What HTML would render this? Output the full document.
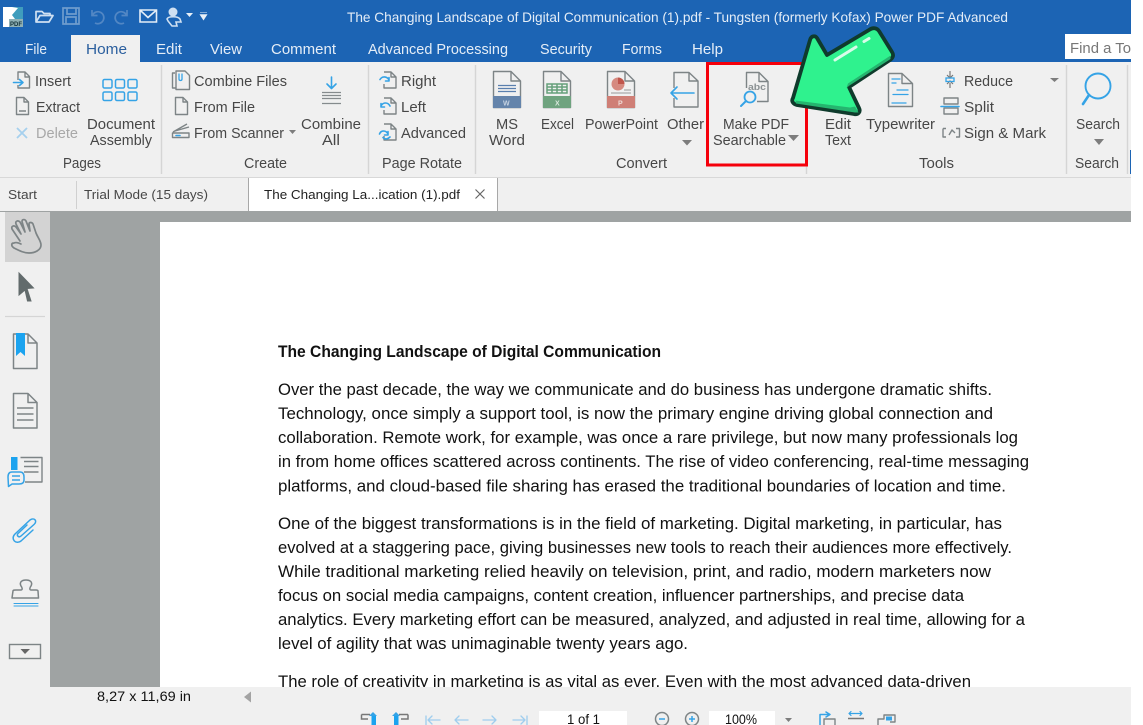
<!DOCTYPE html>
<html><head><meta charset="utf-8"><title>Power PDF</title>
<style>
html,body{margin:0;padding:0;background:#fff;width:1143px;height:725px;overflow:hidden}
svg{display:block}
text{font-family:"Liberation Sans",sans-serif;white-space:pre}
.w{fill:#e4edf7;font-size:14px}
.t{fill:#e4edf7;font-size:14.5px}
.r{fill:#474747;font-size:14.5px}
.s{fill:#474747;font-size:13px}
.d{fill:#111;font-size:16.2px}
.g{fill:none;stroke:#7d8486;stroke-width:1.4;stroke-linejoin:round}
.b{fill:none;stroke:#35a3e6;stroke-width:1.6;stroke-linecap:round;stroke-linejoin:round}
.l{stroke:#d5d5d5;stroke-width:1.4}
</style></head><body>
<svg width="1143" height="725" viewBox="0 0 1143 725" xmlns="http://www.w3.org/2000/svg">
<rect width="1143" height="725" fill="#fff"/>
<!-- title + tabs -->
<rect width="1131" height="62" fill="#1c64b4"/>
<rect x="71" y="35" width="69" height="27" fill="#f0f0f0"/>
<rect x="0" y="62" width="1131" height="116" fill="#f0f0f0"/>
<rect x="0" y="177" width="1131" height="1.4" fill="#d8d8d8"/>
<rect x="0" y="178" width="1131" height="33" fill="#f0f0f0"/>
<rect x="249" y="178" width="248" height="33" fill="#fff"/>
<path d="M248.500 178V211M497.500 178V211" stroke="#a8a8a8"/>
<path d="M76.500 181V209" stroke="#d0d0d0"/>
<!-- logo -->
<rect x="3" y="7" width="20" height="20" fill="#fff"/>
<path d="M12 7H23V19H15L12 15 18 8Z" fill="#3f9dbd"/>
<path d="M3 19L9 14V19H9V27H3Z" fill="#fff"/>
<rect x="9" y="19" width="14" height="8" fill="#8fb0b5"/>
<text x="10" y="26" style="font-size:6px;font-weight:bold;fill:#14323a" textLength="12" lengthAdjust="spacingAndGlyphs">PDF</text>
<!-- quick access -->
<path d="M36 22V11.500H42L44 13.500H50V16M36 22H49L53 15.500H40L36 22Z" fill="none" stroke="#cfe0f2" stroke-width="1.7" stroke-linejoin="round"/>
<g fill="none" stroke="#6f9ccd" stroke-width="1.7"><path d="M63 8H79V24H63ZM67 8V14H76V8M66 24V17H76V24"/>
<path d="M92 10V15.500H97.500M92.500 15A6 6 0 1 1 95 23" stroke="#5287c4"/><path d="M127 10V15.500H121.500M126.500 15A6 6 0 1 0 124 23" stroke="#5287c4"/></g>
<path d="M140 10H156.500V22H140ZM140.500 10.500L148 17.500L156 10.500" fill="none" stroke="#e4edf7" stroke-width="1.6"/>
<circle cx="173" cy="12" r="4.500" fill="#cfe0f2"/><path d="M167 19C168 16 178 16 180 19L181 22H176L177 26H172L168 21Z" fill="none" stroke="#cfe0f2" stroke-width="1.6"/>
<path d="M186 13H193L189.500 17Z" fill="#e8f0f8"/><path d="M200 12.500H207M200 14.500H207L203.500 20Z" fill="#e8f0f8" stroke="#e8f0f8" stroke-width=".6"/>
<text x="347" y="22" class="w" textLength="661" lengthAdjust="spacingAndGlyphs">The Changing Landscape of Digital Communication (1).pdf - Tungsten (formerly Kofax) Power PDF Advanced</text>
<text x="25" y="54" class="t" textLength="22" lengthAdjust="spacingAndGlyphs">File</text>
<text x="86" y="54" textLength="41" lengthAdjust="spacingAndGlyphs" style="font-size:14.500px;fill:#2b5f9e">Home</text>
<text x="156" y="54" class="t" textLength="26" lengthAdjust="spacingAndGlyphs">Edit</text>
<text x="210" y="54" class="t" textLength="32" lengthAdjust="spacingAndGlyphs">View</text>
<text x="271" y="54" class="t" textLength="65" lengthAdjust="spacingAndGlyphs">Comment</text>
<text x="368" y="54" class="t" textLength="140" lengthAdjust="spacingAndGlyphs">Advanced Processing</text>
<text x="540" y="54" class="t" textLength="52" lengthAdjust="spacingAndGlyphs">Security</text>
<text x="622" y="54" class="t" textLength="40" lengthAdjust="spacingAndGlyphs">Forms</text>
<text x="692" y="54" class="t" textLength="31" lengthAdjust="spacingAndGlyphs">Help</text>
<rect x="1065" y="34" width="66" height="25" fill="#fff"/>
<text x="1070" y="53" textLength="61" lengthAdjust="spacingAndGlyphs" style="font-size:14.500px;fill:#777">Find a To</text>
<!-- ribbon separators -->
<path d="M161.500 65V174M368.500 65V174M475.500 65V174M806.500 65V174M1066.500 65V174M1127.500 65V174" class="l"/>
<rect x="1130" y="150" width="1" height="24" fill="#1c64b4"/>
<!-- ribbon text -->
<text x="35" y="86" class="r" textLength="36" lengthAdjust="spacingAndGlyphs">Insert</text>
<text x="36" y="112" class="r" textLength="44" lengthAdjust="spacingAndGlyphs">Extract</text>
<text x="36" y="138" class="r" textLength="42" lengthAdjust="spacingAndGlyphs" style="fill:#a8a8a8">Delete</text>
<text x="87" y="129" class="r" textLength="68" lengthAdjust="spacingAndGlyphs">Document</text>
<text x="90" y="145" class="r" textLength="62" lengthAdjust="spacingAndGlyphs">Assembly</text>
<text x="63" y="168" class="r" textLength="38" lengthAdjust="spacingAndGlyphs">Pages</text>
<text x="194" y="86" class="r" textLength="93" lengthAdjust="spacingAndGlyphs">Combine Files</text>
<text x="194" y="112" class="r" textLength="61" lengthAdjust="spacingAndGlyphs">From File</text>
<text x="194" y="138" class="r" textLength="90" lengthAdjust="spacingAndGlyphs">From Scanner</text>
<text x="301" y="129" class="r" textLength="60" lengthAdjust="spacingAndGlyphs">Combine</text>
<text x="322" y="145" class="r" textLength="18" lengthAdjust="spacingAndGlyphs">All</text>
<text x="244" y="168" class="r" textLength="43" lengthAdjust="spacingAndGlyphs">Create</text>
<text x="401" y="86" class="r" textLength="35" lengthAdjust="spacingAndGlyphs">Right</text>
<text x="401" y="112" class="r" textLength="25" lengthAdjust="spacingAndGlyphs">Left</text>
<text x="401" y="138" class="r" textLength="65" lengthAdjust="spacingAndGlyphs">Advanced</text>
<text x="382" y="168" class="r" textLength="80" lengthAdjust="spacingAndGlyphs">Page Rotate</text>
<text x="496" y="129" class="r" textLength="22" lengthAdjust="spacingAndGlyphs">MS</text>
<text x="489" y="145" class="r" textLength="36" lengthAdjust="spacingAndGlyphs">Word</text>
<text x="541" y="129" class="r" textLength="33" lengthAdjust="spacingAndGlyphs">Excel</text>
<text x="585" y="129" class="r" textLength="73" lengthAdjust="spacingAndGlyphs">PowerPoint</text>
<text x="667" y="129" class="r" textLength="37" lengthAdjust="spacingAndGlyphs">Other</text>
<text x="616" y="168" class="r" textLength="51" lengthAdjust="spacingAndGlyphs">Convert</text>
<text x="723" y="129" class="r" textLength="66" lengthAdjust="spacingAndGlyphs">Make PDF</text>
<text x="713" y="145" class="r" textLength="73" lengthAdjust="spacingAndGlyphs">Searchable</text>
<text x="825" y="129" class="r" textLength="26" lengthAdjust="spacingAndGlyphs">Edit</text>
<text x="825" y="145" class="r" textLength="26" lengthAdjust="spacingAndGlyphs">Text</text>
<text x="866" y="129" class="r" textLength="69" lengthAdjust="spacingAndGlyphs">Typewriter</text>
<text x="964" y="86" class="r" textLength="49" lengthAdjust="spacingAndGlyphs">Reduce</text>
<text x="964" y="112" class="r" textLength="30" lengthAdjust="spacingAndGlyphs">Split</text>
<text x="964" y="138" class="r" textLength="82" lengthAdjust="spacingAndGlyphs">Sign &amp; Mark</text>
<text x="919" y="168" class="r" textLength="35" lengthAdjust="spacingAndGlyphs">Tools</text>
<text x="1076" y="129" class="r" textLength="44" lengthAdjust="spacingAndGlyphs">Search</text>
<text x="1075" y="168" class="r" textLength="44" lengthAdjust="spacingAndGlyphs">Search</text>
<!-- carets -->
<g fill="#7d7d7d"><path d="M289 130H296L292.500 134ZM682 140H692L687 145.500ZM788 135H799L793.500 141ZM1050 78H1059L1054.500 82ZM1094 139H1104L1099 145Z"/></g>
<!-- pages icons -->
<path class="g" d="M18 80V72H25L29.500 76.500V88H18V85M25 72V77H29.500"/><path class="b" d="M13.500 82.500H22.500M19.500 79.500L23 82.500L19.500 85.500"/>
<path class="g" d="M16.500 97.500H24L28.500 102V114.500H16.500ZM24 97.500V102H28.500M19 111H26"/>
<path d="M17 128L27 138M27 128L17 138" stroke="#a6d0ee" stroke-width="1.800" fill="none"/>
<g class="b" style="stroke-width:1.500"><rect x="103" y="79.500" width="9" height="8.500" rx="1.500"/><rect x="115.500" y="79.500" width="9" height="8.500" rx="1.500"/><rect x="128" y="79.500" width="9" height="8.500" rx="1.500"/><rect x="103" y="92" width="9" height="8.500" rx="1.500"/><rect x="115.500" y="92" width="9" height="8.500" rx="1.500"/><rect x="128" y="92" width="9" height="8.500" rx="1.500"/></g>
<!-- create icons -->
<path class="g" d="M175 73H172.500V88H176M176 71H185L189.500 75.500V89.500H176Z"/><path class="b" d="M179 74V79C179 81 182 81 182 79V74" style="stroke-width:1.300"/>
<path class="g" d="M175.500 97.500H183L187.500 102V114.500H175.500ZM183 97.500V102H187.500"/>
<path class="g" d="M172.500 137.500V133L189 133V137.500ZM173 132L187 124M175 131L189 127"/><path class="b" d="M176 135.500H180"/>
<path class="b" d="M331.500 77V88M327 84L331.500 88.500L336 84"/>
<path d="M322 92.500H341M322 95.500H341M322 98.500H341M322 103.500H341" stroke="#858b8d" stroke-width="1.300"/>
<!-- rotate icons -->
<g><path class="g" d="M384 72H391L396 77V88H384V84M391 72V77H396"/><path class="b" d="M380 79.500C382 76 387 76 389 80M389 77.500V81H385.500"/>
<path class="g" d="M384 98H391L396 103V114H384V110M391 98V103H396"/><path class="b" d="M390 106C388 102 383 102 381 106M381 103.500V107H384.500"/>
<path class="g" d="M384 124H391L396 129V140H384V136M391 124V129H396"/><path class="b" d="M379.500 134C381 130 386 130 388 134M388 131.500V135H384.500M383 137.500C385 140 388 139 390 137"/></g>
<!-- convert -->
<g>
<path class="g" d="M493.500 71.500H511L520.500 81V107.500H493.500ZM511 71.500V81H520.500"/><rect x="493" y="96" width="28" height="12" fill="#6484ab"/><path d="M498 85.500H516M498 88.500H516M498 91.500H516" stroke="#5a7fae" stroke-width="1.200"/><text x="503" y="105.500" style="font-size:7px;font-weight:bold;fill:#c8d4e2">W</text>
<path class="g" d="M543.500 71.500H561L570.500 81V107.500H543.500ZM561 71.500V81H570.500"/><rect x="543" y="96" width="28" height="12" fill="#6fa37f"/><path d="M547 84H567V93H547ZM547 87H567M547 90H567M552 84V93M557 84V93M562 84V93" stroke="#66a07a" stroke-width="1.500" fill="none"/><text x="555" y="105.500" style="font-size:7px;font-weight:bold;fill:#d8e8dc">X</text>
<path class="g" d="M607.500 71.500H625L634.500 81V107.500H607.500ZM625 71.500V81H634.500"/><rect x="607" y="96" width="28" height="12" fill="#cf7f76"/><circle cx="618" cy="84" r="6.500" fill="#d68a80"/><path d="M618 84V77.500A6.500 6.500 0 0 1 624.500 84Z" fill="#c0564c"/><path d="M624 90H631M611 93H631" stroke="#999" stroke-width="1"/><text x="618" y="105.500" style="font-size:7px;font-weight:bold;fill:#f0dad6">P</text>
<path class="g" d="M674 88V72.500H689L698 81V107H674V98M689 72.500V81H698"/><path class="b" d="M671 93H694M677 87L671 93L677 99"/>
</g>
<!-- make pdf -->
<path class="g" d="M746.500 88V72.500H759L768 81.500V101.500H757M759 72.500V81.500H768"/>
<text x="748" y="90" style="font-size:9.500px;font-weight:bold;fill:#8b9193" textLength="18" lengthAdjust="spacingAndGlyphs">abc</text>
<circle cx="750" cy="97" r="5.500" class="b" style="stroke-width:1.800"/><path class="b" d="M746 101L741 106" style="stroke-width:2"/>
<rect x="707.500" y="63.500" width="99" height="101.500" fill="none" stroke="#f5000b" stroke-width="3"/>
<!-- tools -->
<path class="g" d="M888.500 73.500H902L912.500 83.500V106.500H888.500ZM902 73.500V83.500H912.500"/>
<path class="b" d="M892 79H900M892 83H896M897 90H908M893 94.500H908M892 103H906" style="stroke-width:1.300"/>
<path d="M950 71V77M950 83V88M947 75L950 78L953 75M947 84L950 81L953 84" fill="none" stroke="#777" stroke-width="1.200"/><rect x="946" y="78" width="8" height="3.500" fill="none" stroke="#35a3e6" stroke-width="1.300"/>
<path class="g" d="M944 98H958V104H944ZM944 108H958V114H944Z"/><path class="b" d="M941 106.500H959"/>
<path class="g" d="M943 128.500H946M943 128.500V137H946M956 128.500H959.500V137H956M949 135L952 130L955 133"/>
<!-- arrow -->
<path d="M869 30C873 27 877 28 879 31L892 52C894 55 893 58 890 60L849 87L859 108C861 112 858 115 854 114L797 105C793 104 791 101 793 98L810 40C811 36 815 35 817 38L827 55Z" fill="#2ff28e" stroke="#0f3b2c" stroke-width="3.800" stroke-linejoin="round"/>
<path d="M890.500 55.500L848 83.500L846.500 88L849.500 85.500L890.500 59Z" fill="#25b56f"/>
<path d="M795.500 100.500L850 107.500L855 106.500L858.500 112.500L855 112.500L796 103.500Z" fill="#25b56f"/>
<path d="M835 60L856 47M864 41.500L869 38.500" stroke="#d8fbe9" stroke-width="3" stroke-linecap="round" fill="none"/>
<!-- search -->
<circle cx="1098" cy="86" r="12.500" class="b" style="stroke-width:1.900"/><path class="b" d="M1089 95L1083 104" style="stroke-width:2.600"/>
<!-- doc tabs -->
<text x="8" y="199" class="s" textLength="29" lengthAdjust="spacingAndGlyphs">Start</text>
<text x="84" y="199" class="s" textLength="124" lengthAdjust="spacingAndGlyphs">Trial Mode (15 days)</text>
<text x="264" y="199" textLength="196" lengthAdjust="spacingAndGlyphs" style="font-size:13px;fill:#222">The Changing La...ication (1).pdf</text>
<path d="M475.500 189.500L484.500 198.500M484.500 189.500L475.500 198.500" stroke="#666" stroke-width="1.200"/>
<!-- main -->
<rect x="0" y="211" width="1131" height="476" fill="#9fa3a3"/>
<rect x="0" y="212" width="50" height="476" fill="#f0f0f0"/>
<rect x="5" y="212" width="45" height="50" fill="#d3d3d3"/>
<rect x="160" y="222" width="971" height="465" fill="#fff"/>
<rect x="0" y="687" width="1131" height="38" fill="#f0f0f0"/>
<!-- sidebar icons -->
<path d="M20 241L12 229C11 226 14 225 16 227L21 234L16 224C15 221 18 220 20 222L25 232L22 221.500C22 219 25 219 26 221L30 231L29 224C29 222 32 222 33 224L36 233C38 238 41 241 41 245C41 250 35 253 29 253C24 253 20 251 14 248C11 246 11 243 14 243C16 242 19 243 21 244" fill="none" stroke="#7d8486" stroke-width="1.700" stroke-linejoin="round" stroke-linecap="round"/>
<path d="M19 273L33.500 288L27 288.500L31 301L27.500 301L25 290L19 295Z" fill="#626b6c" stroke="#626b6c" stroke-width="1"/>
<path d="M5 316.500H45" stroke="#d5d5d5" stroke-width="1.200"/>
<path class="g" d="M13.500 334H28L37 343V368.500H13.500ZM28 334V343H37" style="stroke-width:1.500"/>
<path d="M16 333H25V356L20.500 352L16 356Z" fill="#1ba3ef"/>
<path class="g" d="M13.500 393.500H28L37 402.500V428H13.500ZM28 393.500V402.500H37M17 408H33.500M17 414H33.500M17 420H33.500" style="stroke-width:1.500"/>
<rect x="11" y="457" width="6.500" height="13" fill="#1ba3ef"/>
<path class="g" d="M20.500 457.500H42V482H25M24 461.500H38.500M24 466.500H38.500M24 472H38.500"/>
<path d="M12 472H20C23 472 24 474 24 477V480C24 483 22 484 19 484H12L8.500 486.500L8 477C8 474 9 472 12 472ZM12 476H20M12 480H20" fill="#f0f0f0" stroke="#35a3e6" stroke-width="1.500" stroke-linejoin="round"/>
<path class="b" d="M27 525L18 533.500C16 535.500 19 538 21 536L34 524.500C38 521 34 517 30 520L15 534C10 539 16 545 21 541L33 530" style="stroke-width:1.500"/>
<path class="g" d="M12 598L13 591C13 590 14 590 16 590H21C23 590 22 587 21 586C19 582 22 580 26 580C30 580 33 582 31 586C30 587 29 590 31 590H36C37 590 38 590 38 591L38.500 598Z" style="stroke-width:1.500"/>
<path class="b" d="M14 603.500H38M14 606H38" style="stroke-width:1.100"/>
<rect x="9.500" y="644.500" width="31" height="14" fill="none" stroke="#7d8486" stroke-width="1.400"/><path d="M20.500 649H30L25 654Z" fill="#666"/>
<!-- document -->
<text x="278" y="357" class="d" style="font-weight:bold" textLength="383" lengthAdjust="spacingAndGlyphs">The Changing Landscape of Digital Communication</text>
<text x="278" y="395" class="d" textLength="714" lengthAdjust="spacingAndGlyphs">Over the past decade, the way we communicate and do business has undergone dramatic shifts.</text>
<text x="278" y="419" class="d" textLength="715" lengthAdjust="spacingAndGlyphs">Technology, once simply a support tool, is now the primary engine driving global connection and</text>
<text x="278" y="443" class="d" textLength="740" lengthAdjust="spacingAndGlyphs">collaboration. Remote work, for example, was once a rare privilege, but now many professionals log</text>
<text x="278" y="467" class="d" textLength="751" lengthAdjust="spacingAndGlyphs">in from home offices scattered across continents. The rise of video conferencing, real-time messaging</text>
<text x="278" y="491.500" class="d" textLength="728" lengthAdjust="spacingAndGlyphs">platforms, and cloud-based file sharing has erased the traditional boundaries of location and time.</text>
<text x="278" y="529" class="d" textLength="724" lengthAdjust="spacingAndGlyphs">One of the biggest transformations is in the field of marketing. Digital marketing, in particular, has</text>
<text x="278" y="553" class="d" textLength="734" lengthAdjust="spacingAndGlyphs">evolved at a staggering pace, giving businesses new tools to reach their audiences more effectively.</text>
<text x="278" y="577" class="d" textLength="713" lengthAdjust="spacingAndGlyphs">While traditional marketing relied heavily on television, print, and radio, modern marketers now</text>
<text x="278" y="601" class="d" textLength="686" lengthAdjust="spacingAndGlyphs">focus on social media campaigns, content creation, influencer partnerships, and precise data</text>
<text x="278" y="625" class="d" textLength="747" lengthAdjust="spacingAndGlyphs">analytics. Every marketing effort can be measured, analyzed, and adjusted in real time, allowing for a</text>
<text x="278" y="649" class="d" textLength="410" lengthAdjust="spacingAndGlyphs">level of agility that was unimaginable twenty years ago.</text>
<text x="278" y="687" class="d" textLength="693" lengthAdjust="spacingAndGlyphs">The role of creativity in marketing is as vital as ever. Even with the most advanced data-driven</text>
<rect x="238" y="687" width="893" height="38" fill="#f0f0f0"/>
<rect x="50" y="687" width="188" height="38" fill="#f0f0f0"/>
<!-- status -->
<text x="97" y="701" textLength="94" lengthAdjust="spacingAndGlyphs" style="font-size:14px;fill:#111">8,27 x 11,69 in</text>
<path d="M244 697L251 691.500V702.500Z" fill="#a3a3a3"/>
<path d="M361.500 714.500H370M361.500 714.500V719H368" fill="none" stroke="#777" stroke-width="1.500"/>
<path d="M373 712L377 716H369Z" fill="#35a3e6"/><rect x="371.500" y="716" width="4.500" height="9" fill="#1ba3ef"/>
<path d="M408 714.500H399M408 714.500V719H401" fill="none" stroke="#777" stroke-width="1.500"/>
<path d="M396 712L392 716H400Z" fill="#35a3e6"/><rect x="394" y="716" width="4.500" height="9" fill="#1ba3ef"/>
<g class="b" style="stroke:#9fcdee;stroke-width:1.300"><path d="M426 716V725M440 720H428M432 716L428 720L432 724"/><path d="M468 720H455M459 716L455 720L459 724"/><path d="M483 720H496M492 716L496 720L492 724"/><path d="M527 716V725M513 720H525M521 716L525 720L521 724"/></g>
<rect x="539" y="711" width="88" height="14" fill="#fff"/>
<text x="567" y="724" textLength="33" lengthAdjust="spacingAndGlyphs" style="font-size:13.500px;fill:#111">1 of 1</text>
<circle cx="662" cy="719" r="6.500" fill="none" stroke="#7d8486" stroke-width="1.500"/><path d="M659 719H665" stroke="#35a3e6" stroke-width="1.500"/>
<circle cx="692" cy="719" r="6.500" fill="none" stroke="#7d8486" stroke-width="1.500"/><path d="M689 719H695M692 716V722" stroke="#35a3e6" stroke-width="1.500"/>
<rect x="709" y="711" width="66" height="14" fill="#fff"/>
<text x="725" y="724" textLength="32" lengthAdjust="spacingAndGlyphs" style="font-size:13.500px;fill:#111">100%</text>
<path d="M785 718H792L788.500 722Z" fill="#7d7d7d"/>
<path class="b" d="M820 725V714.500H829M826 712L830 714.500L826 717" style="stroke-width:1.500"/><path class="g" d="M824 725V719H835V725"/>
<path class="b" d="M849 713.500H862M851 711.500L849 713.500L851 715.500M860 711.500L862 713.500L860 715.500" style="stroke-width:1.200"/><path d="M848 718.500H864" stroke="#777" stroke-width="1.500"/>
<path class="g" d="M878 725V719H884V715H895V722H890"/><rect x="886" y="716.500" width="6" height="4" fill="#35a3e6"/>
</svg>
</body></html>
